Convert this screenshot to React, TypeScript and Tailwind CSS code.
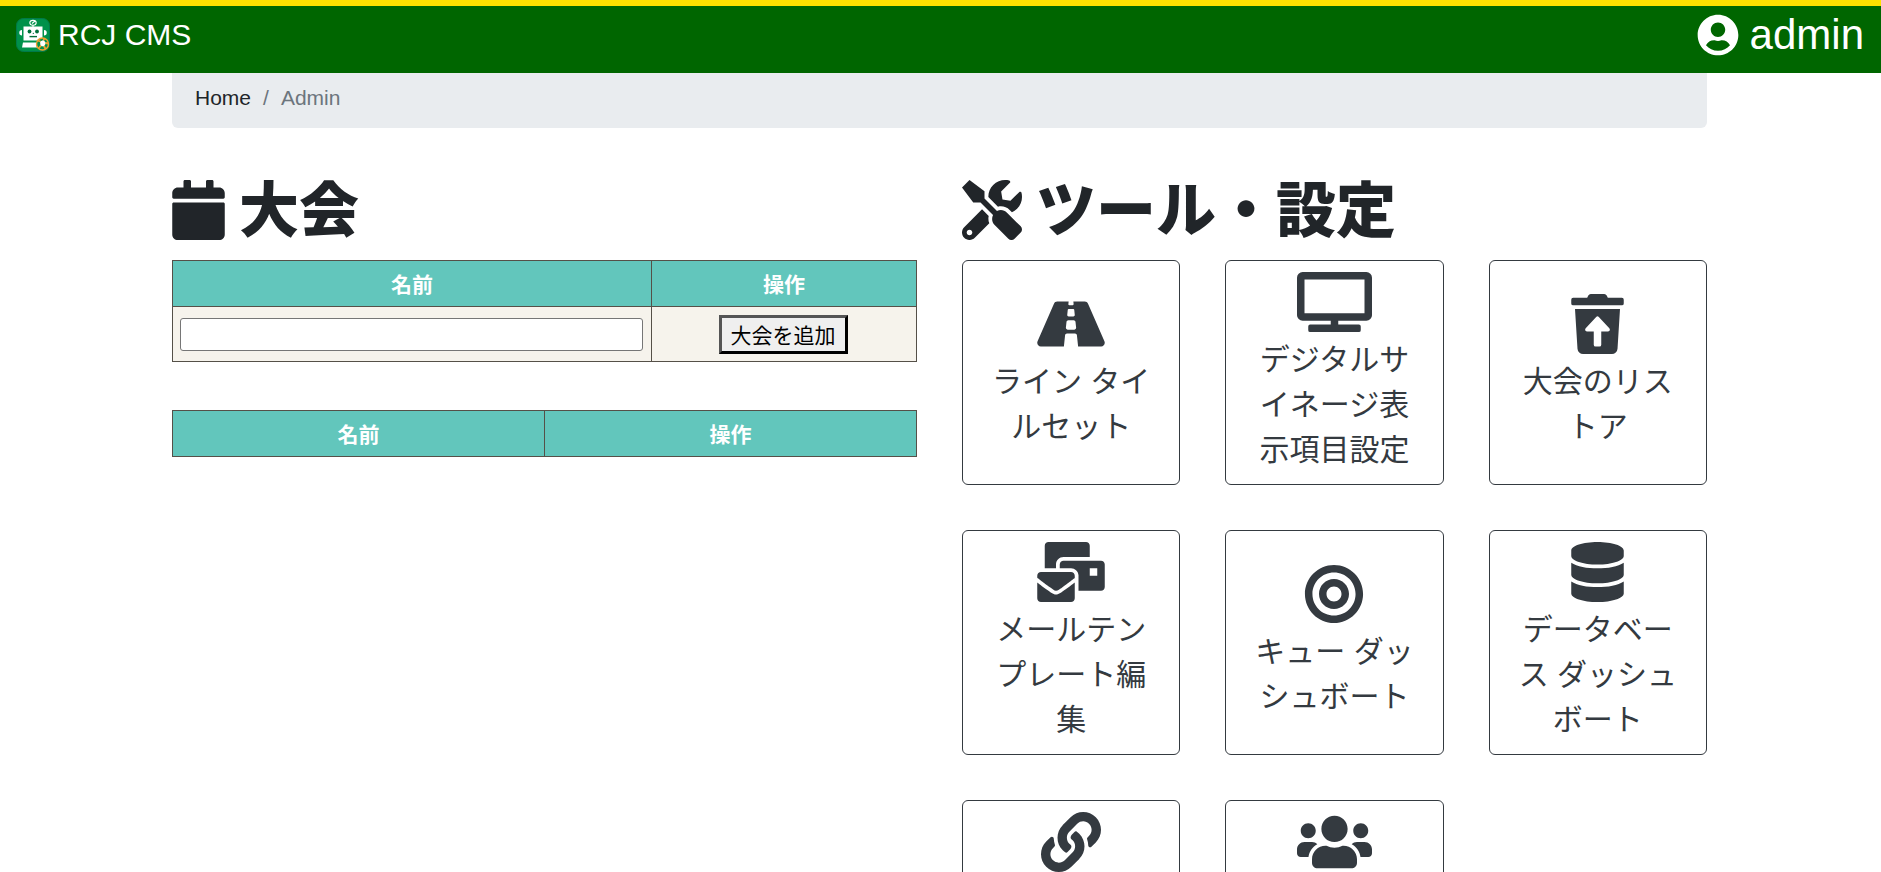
import type { IconType } from 'react-icons';
import {
  FaBullseye,
  FaCalendar,
  FaDatabase,
  FaLink,
  FaMailBulk,
  FaRoad,
  FaTools,
  FaTrashRestore,
  FaTv,
  FaUserCircle,
  FaUsers,
} from 'react-icons/fa';

interface ToolItem {
  id: string;
  icon: IconType;
  iconWidth: string;
  label?: string;
}

const tools: ToolItem[] = [
  { id: 'tilesets', icon: FaRoad, iconWidth: 'w-[68px]', label: 'ライン タイルセット' },
  { id: 'signage', icon: FaTv, iconWidth: 'w-[75px]', label: 'デジタルサイネージ表示項目設定' },
  { id: 'restore', icon: FaTrashRestore, iconWidth: 'w-[53px]', label: '大会のリストア' },
  { id: 'mail', icon: FaMailBulk, iconWidth: 'w-[68px]', label: 'メールテンプレート編集' },
  { id: 'queue', icon: FaBullseye, iconWidth: 'w-[60px]', label: 'キュー ダッシュボート' },
  { id: 'database', icon: FaDatabase, iconWidth: 'w-[53px]', label: 'データベース ダッシュボート' },
  { id: 'links', icon: FaLink, iconWidth: 'w-[60px]' },
  { id: 'users', icon: FaUsers, iconWidth: 'w-[75px]' },
];

function Logo() {
  return (
    <svg className="h-[34px] w-[34px]" viewBox="0 0 34 34" aria-hidden="true">
      <rect x="0.5" y="0.5" width="33" height="33" rx="7" fill="#00914a" stroke="#007a4a" />
      <ellipse cx="17" cy="4.8" rx="3.2" ry="2.4" fill="none" stroke="#fff" strokeWidth="1.1" />
      <path d="M16 5.5l3-2.5M17 7v2" stroke="#fff" strokeWidth="1.1" />
      <rect x="7.5" y="8.5" width="19" height="14" fill="#fff" />
      <path d="M6 12v5.5a2.75 2.75 0 0 1 0-5.5zM28 12v5.5a2.75 2.75 0 0 0 0-5.5z" fill="#fff" />
      <circle cx="13.5" cy="13.5" r="1.9" fill="#00703a" />
      <circle cx="21" cy="13.5" r="1.9" fill="#00703a" />
      <path d="M16.5 16l.8-1.5.8 1.5z" fill="#00703a" />
      <path d="M13.5 18.6h7.5" stroke="#00703a" strokeWidth="1.4" />
      <path d="M7 24.5h20v5H6z" fill="#fff" />
      <circle cx="26.5" cy="26" r="6" fill="#00914a" stroke="#f0a030" strokeWidth="1.4" />
      <path d="M24 23.5l3.5-1.5 2.5 3-2 3.5-3.5-.5z" fill="#fff" />
      <path
        d="M24.5 23.5l-3-1M27.5 22.5l1-2.5M29.5 25l3 .5M28 28l1.5 3M25 27.5l-2.5 3"
        fill="none"
        stroke="#f0a030"
        strokeWidth="1.8"
      />
    </svg>
  );
}

function Header() {
  return (
    <header className="flex h-[73px] items-start justify-between border-t-[6px] border-[#ffe000] bg-[#006600] pr-[17px] pl-4 text-white">
      <a href="#" className="flex h-[58px] items-center gap-2 text-[30px] leading-none">
        <Logo />
        RCJ CMS
      </a>
      <a href="#" className="flex h-[58px] items-center gap-[11px] text-[42px] leading-none">
        <FaUserCircle />
        admin
      </a>
    </header>
  );
}

function ToolCard({ icon: Icon, iconWidth, label }: ToolItem) {
  return (
    <a
      href="#"
      className={`flex h-[225px] flex-col items-center rounded-[6px] border border-[#343a40] px-5 pb-[2px] text-center text-[30px] leading-[45px] text-[#343a40] ${
        label ? 'justify-center' : 'justify-start pt-[11px]'
      }`}
    >
      <Icon className={`mb-[5px] h-[60px] shrink-0 ${iconWidth}`} />
      {label}
    </a>
  );
}

const cell = 'border border-[#555048]';
const headCell = 'h-[46px] border border-[#555048] bg-[#62c6bc] pt-[2px] text-center font-bold text-white';
const heading = 'mb-[10px] flex h-[76px] items-center gap-[14px] text-[60px] leading-none font-black';

export default function App() {
  return (
    <div className="h-screen overflow-hidden bg-white font-['Liberation_Sans','Noto_Sans_CJK_JP',sans-serif] text-[21px] text-[#212529]">
      <Header />
      <main className="pr-[174px] pl-[172px]">
        <nav aria-label="breadcrumb" className="h-[55px] rounded-b-[6px] bg-[#e9ecef] px-[23px] pt-[9px]">
          <ol className="flex gap-3 leading-8">
            <li>
              <a href="#">Home</a>
            </li>
            <li className="text-[#6c757d]">/</li>
            <li className="text-[#6c757d]">Admin</li>
          </ol>
        </nav>

        <div className="mt-[46px] grid grid-cols-2 gap-[45px]">
          <section>
            <h1 className={heading}>
              <FaCalendar className="mb-1 h-[60px] w-[53px]" />
              大会
            </h1>
            <table className="w-full table-fixed border-collapse">
              <thead>
                <tr>
                  <th className={headCell}>
                    <label htmlFor="competition-name">名前</label>
                  </th>
                  <th className={`${headCell} w-[265px]`}>操作</th>
                </tr>
              </thead>
              <tbody className="bg-[#f6f3ec]">
                <tr>
                  <td className={`${cell} h-[55px] pr-2 pl-[7px]`}>
                    <input
                      id="competition-name"
                      type="text"
                      className="block h-[33px] w-full rounded-[3px] border border-[#767676] bg-white px-1"
                    />
                  </td>
                  <td className={`${cell} pr-[2px] text-center`}>
                    <button
                      type="button"
                      className="h-[39px] border-[3px] border-t-[#555] border-r-black border-b-black border-l-[#555] bg-[#efefef] px-[9px] pt-[2px] leading-8 text-black"
                    >
                      大会を追加
                    </button>
                  </td>
                </tr>
              </tbody>
            </table>
            <table className="mt-12 w-full table-fixed border-collapse">
              <thead>
                <tr>
                  <th className={headCell}>名前</th>
                  <th className={headCell}>操作</th>
                </tr>
              </thead>
            </table>
          </section>

          <section>
            <h1 className={heading}>
              <FaTools className="mb-1 h-[60px] w-[60px]" />
              ツール・設定
            </h1>
            <div className="grid grid-cols-3 gap-[45px]">
              {tools.map((tool) => (
                <ToolCard key={tool.id} {...tool} />
              ))}
            </div>
          </section>
        </div>
      </main>
    </div>
  );
}
